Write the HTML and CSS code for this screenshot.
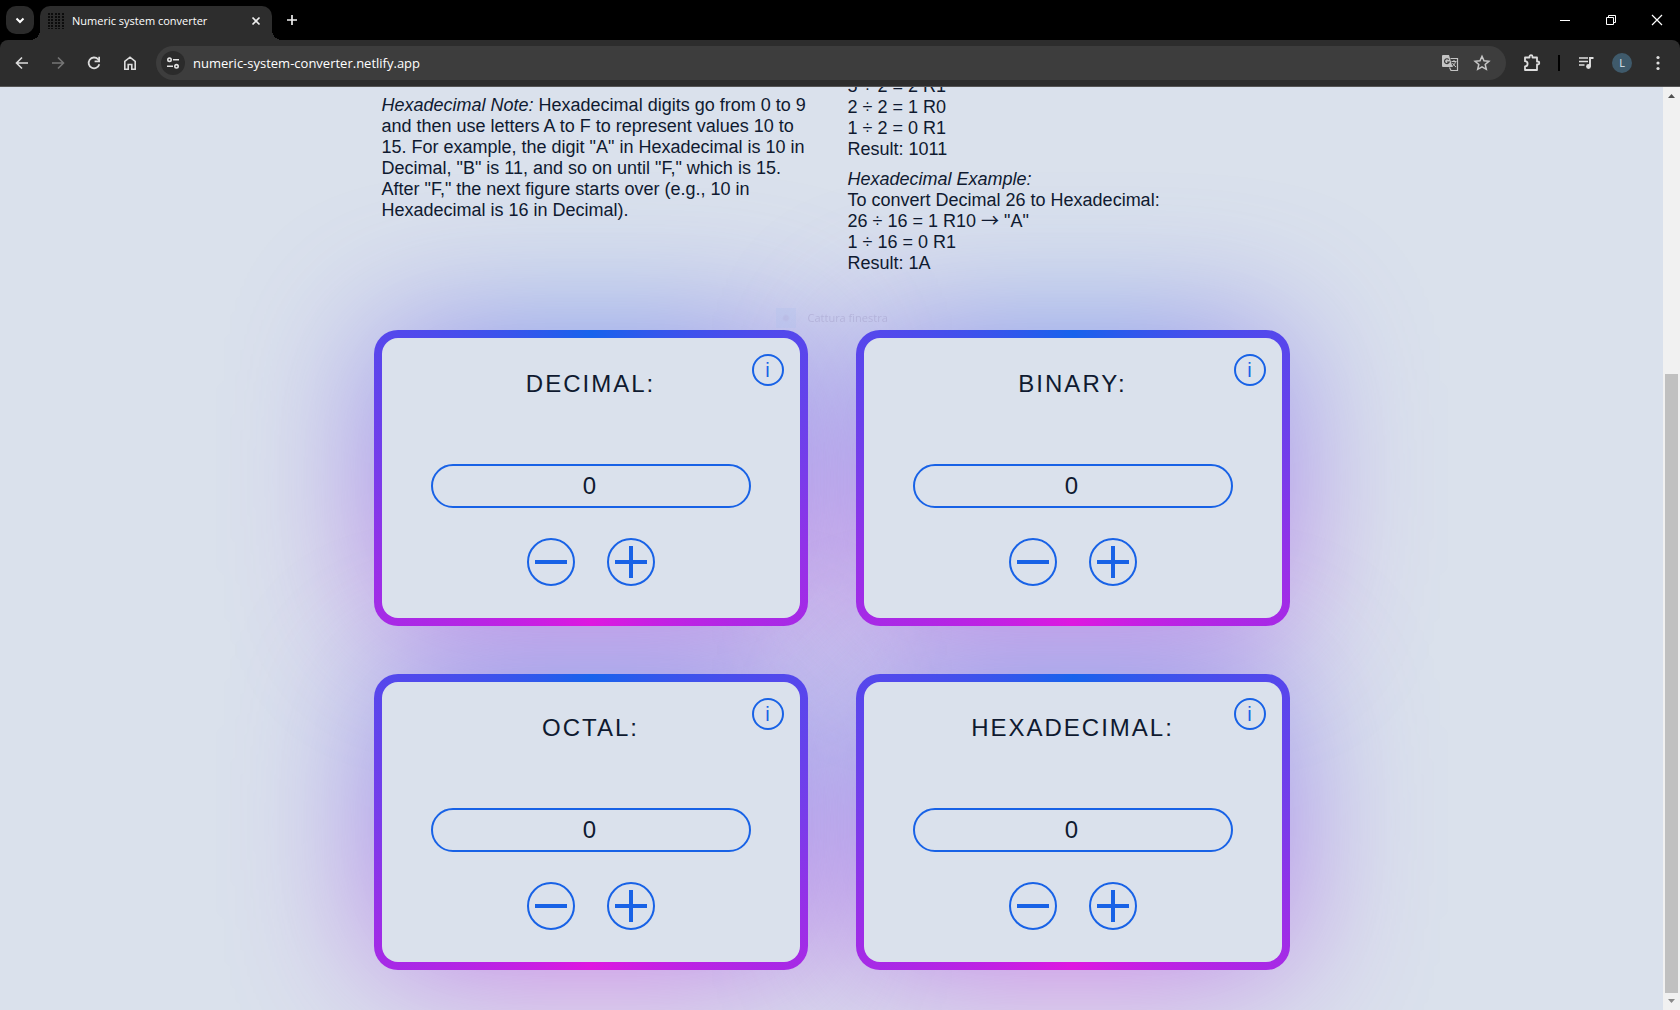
FILE: index.html
```html
<!DOCTYPE html>
<html lang="en">
<head>
<meta charset="utf-8">
<title>Numeric system converter</title>
<link rel="stylesheet" href="styles.css">
</head>
<body>
<header class="browser">
  <div class="tab-strip">
    <button class="tab-search" aria-label="Search tabs"><svg width="12" height="12" viewBox="0 0 12 12"><path d="M2.5 4.5 6 8l3.500-3.500" fill="none" stroke="#fff" stroke-width="2"/></svg></button>
    <div class="tab">
      <svg class="favicon" width="16" height="16" viewBox="0 0 16 16"><g fill="none" stroke="#0c0c0c" stroke-width="2" stroke-dasharray="2 1"><path d="M1 0v16M4 0v16M8 0v16M11 0v16M15 0v16"/></g></svg>
      <span class="tab-title">Numeric system converter</span>
      <button class="tab-close" aria-label="Close tab"><svg width="10" height="10" viewBox="0 0 10 10"><path d="M1.500 1.500l7 7M8.500 1.500l-7 7" fill="none" stroke="#eee" stroke-width="1.700"/></svg></button>
    </div>
    <button class="new-tab" aria-label="New tab"><svg width="12" height="12" viewBox="0 0 12 12"><path d="M6 1v10M1 6h10" fill="none" stroke="#eee" stroke-width="1.700"/></svg></button>
    <div class="window-controls">
      <button aria-label="Minimize"><svg width="12" height="12" viewBox="0 0 12 12"><path d="M1 6.500h10" stroke="#fff"/></svg></button>
      <button aria-label="Restore"><svg width="12" height="12" viewBox="0 0 12 12"><path d="M1.500 3.500h7v7h-7zM3.500 3.500v-2h7v7h-2" fill="none" stroke="#fff"/></svg></button>
      <button aria-label="Close"><svg width="12" height="12" viewBox="0 0 12 12"><path d="M1 1l10 10M11 1 1 11" fill="none" stroke="#fff" stroke-width="1.200"/></svg></button>
    </div>
  </div>
  <div class="toolbar">
    <button class="tool" aria-label="Back"><svg width="16" height="16" viewBox="0 0 16 16"><path d="M14 8H3M8 2.500 2.500 8 8 13.500" fill="none" stroke="#dcdcdc" stroke-width="1.600"/></svg></button>
    <button class="tool" aria-label="Forward"><svg width="16" height="16" viewBox="0 0 16 16"><path d="M2 8h11M8 2.500 13.500 8 8 13.500" fill="none" stroke="#757575" stroke-width="1.600"/></svg></button>
    <button class="tool" aria-label="Reload"><svg width="16" height="16" viewBox="0 0 16 16"><path d="M13.300 9.200A5.400 5.400 0 1 1 12 4.200l1.200 1.200" fill="none" stroke="#dcdcdc" stroke-width="1.800"/><path d="M14 1.800v5.400H8.600V5.600h3.700V1.800z" fill="#dcdcdc"/></svg></button>
    <button class="tool" aria-label="Home"><svg width="16" height="16" viewBox="0 0 16 16"><path d="M2.800 6.300 8 2.200l5.200 4.100v7.900H9.800V9.500H6.200v4.700H2.800z" fill="none" stroke="#dcdcdc" stroke-width="1.600"/></svg></button>
    <div class="omnibox">
      <button class="site-info" aria-label="View site information"><svg width="14" height="14" viewBox="0 0 14 14"><g fill="none" stroke="#e3e3e3" stroke-width="1.600"><circle cx="3.500" cy="3.700" r="1.700"/><path d="M7 3.700h6M1 10.300h6"/><circle cx="10.500" cy="10.300" r="1.700"/></g></svg></button>
      <input class="url" type="text" aria-label="Address" value="numeric-system-converter.netlify.app">
      <button class="omni-action" aria-label="Translate"><svg width="18" height="18" viewBox="0 0 18 18"><path d="M2 1h6l3.500 12H2a1 1 0 0 1-1-1V2a1 1 0 0 1 1-1z" fill="#c4c4c4"/><path d="M7.800 5.600A2.400 2.400 0 1 0 8.200 8H6" fill="none" stroke="#3d3d3d" stroke-width="1.200"/><path d="M9.500 4.500h7v12H10l-1.500-3" fill="none" stroke="#c4c4c4" stroke-width="1.200"/><path d="M10.500 7.500h5M13 6v1.500M14.500 7.500c-.5 2.500-2 4-3.500 5M11.500 9c1 1.700 2 2.800 3.500 4" fill="none" stroke="#c4c4c4"/></svg></button>
      <button class="omni-action" aria-label="Bookmark this tab"><svg width="18" height="18" viewBox="0 0 18 18"><path d="M9 2.300l2 4.500 4.900.5-3.700 3.200 1.100 4.800L9 12.800l-4.300 2.500 1.100-4.800-3.700-3.200 4.900-.5z" fill="none" stroke="#c7c7c7" stroke-width="1.500"/></svg></button>
    </div>
    <button class="tool" aria-label="Extensions"><svg width="18" height="18" viewBox="0 0 18 18"><path d="M2 3.500h4.500v-.8a1.500 1.500 0 0 1 3 0v.8H14v4h.8a1.500 1.500 0 0 1 0 3H14V16H2v-3.600a2.600 2.600 0 0 0 0-5.200z" fill="none" stroke="#dedede" stroke-width="1.800" stroke-linejoin="round"/></svg></button>
    <span class="separator"></span>
    <button class="tool" aria-label="Media controls"><svg width="16" height="14" viewBox="0 0 16 14"><path d="M1 2h9M1 5.500h9M1 9h5.500" stroke="#dedede" stroke-width="1.700"/><path d="M12 10.500V2h3.500" fill="none" stroke="#dedede" stroke-width="1.900"/><circle cx="10.500" cy="10.500" r="2.400" fill="#dedede"/></svg></button>
    <button class="tool" aria-label="Profile"><span class="avatar">L</span></button>
    <button class="tool" aria-label="Menu"><svg width="4" height="16" viewBox="0 0 4 16"><g fill="#dedede"><circle cx="2" cy="2.500" r="1.600"/><circle cx="2" cy="8" r="1.600"/><circle cx="2" cy="13.500" r="1.600"/></g></svg></button>
  </div>
</header>

<div class="viewport">
  <main class="page">
    <section class="notes">
      <div class="note note-hex">
        <p><em>Hexadecimal Note:</em> Hexadecimal digits go from 0 to 9 and then use letters A to F to represent values 10 to 15. For example, the digit "A" in Hexadecimal is 10 in Decimal, "B" is 11, and so on until "F," which is 15. After "F," the next figure starts over (e.g., 10 in Hexadecimal is 16 in Decimal).</p>
      </div>
      <div class="note">
        <p>5 ÷ 2 = 2 R1<br>2 ÷ 2 = 1 R0<br>1 ÷ 2 = 0 R1<br>Result: 1011</p>
        <p><em>Hexadecimal Example:</em><br>To convert Decimal 26 to Hexadecimal:<br>26 ÷ 16 = 1 R10 <span class="arrow">→</span> "A"<br>1 ÷ 16 = 0 R1<br>Result: 1A</p>
      </div>
    </section>
    <section class="cards">
      <article class="card">
        <button class="info" aria-label="About decimal">i</button>
        <label class="card-title" for="decimal">DECIMAL:</label>
        <input class="value" id="decimal" type="text" value="0">
        <div class="steps"><button class="step minus" aria-label="Decrease"></button><button class="step plus" aria-label="Increase"></button></div>
      </article>
      <article class="card">
        <button class="info" aria-label="About binary">i</button>
        <label class="card-title" for="binary">BINARY:</label>
        <input class="value" id="binary" type="text" value="0">
        <div class="steps"><button class="step minus" aria-label="Decrease"></button><button class="step plus" aria-label="Increase"></button></div>
      </article>
      <article class="card">
        <button class="info" aria-label="About octal">i</button>
        <label class="card-title" for="octal">OCTAL:</label>
        <input class="value" id="octal" type="text" value="0">
        <div class="steps"><button class="step minus" aria-label="Decrease"></button><button class="step plus" aria-label="Increase"></button></div>
      </article>
      <article class="card">
        <button class="info" aria-label="About hexadecimal">i</button>
        <label class="card-title" for="hexadecimal">HEXADECIMAL:</label>
        <input class="value" id="hexadecimal" type="text" value="0">
        <div class="steps"><button class="step minus" aria-label="Decrease"></button><button class="step plus" aria-label="Increase"></button></div>
      </article>
      <div class="capture-hint"><span class="capture-icon"></span>Cattura finestra</div>
    </section>
  </main>
  <div class="scrollbar">
    <svg width="17" height="17" viewBox="0 0 17 17"><path d="M5 11l3.500-4 3.500 4z" fill="#505050"/></svg>
    <div class="scroll-space"></div>
    <div class="scroll-thumb"></div>
    <svg width="17" height="17" viewBox="0 0 17 17"><path d="M5 6l3.500 4L12 6z" fill="#8a8a8a"/></svg>
  </div>
</div>
</body>
</html>
```
FILE: styles.css
```css
* { box-sizing: border-box; }

:root {
  --page: #dae1ec;
  --ink: #0f1a30;
  --blue: #1862e6;
  --ring: conic-gradient(#1763ec, #5647ec 56deg, #7a3bea 90deg, #a62ae6 124deg, #de18e0 180deg, #a62ae6 236deg, #7a3bea 270deg, #5647ec 304deg, #1763ec);
}

body {
  margin: 0;
  height: 100vh;
  display: flex;
  flex-direction: column;
  overflow: hidden;
  background: var(--page);
  color: var(--ink);
  font-family: "Liberation Sans", Arial, sans-serif;
}

button {
  display: flex;
  align-items: center;
  justify-content: center;
  margin: 0;
  padding: 0;
  border: 0;
  background: none;
  color: inherit;
  font-family: inherit;
}

input { min-width: 0; margin: 0; outline: 0; }

/* browser frame */
.browser {
  flex: none;
  background: #000;
  color: #fff;
  font-family: "Open Sans", "Noto Sans", sans-serif;
}

.tab-strip {
  display: flex;
  align-items: center;
  height: 40px;
  padding-left: 6px;
}

.tab-search {
  width: 28px;
  height: 28px;
  margin-right: 6px;
  border-radius: 10px;
  background: #2b2b2b;
}

.tab {
  position: relative;
  display: flex;
  align-items: center;
  align-self: flex-end;
  gap: 8px;
  width: 232px;
  height: 34px;
  padding: 0 8px 4px;
  border-radius: 10px 10px 0 0;
  background: #2d2d2d;
}

.tab::before,
.tab::after {
  content: "";
  position: absolute;
  bottom: 0;
  width: 10px;
  height: 10px;
}

.tab::before { right: 100%; background: radial-gradient(circle at 0 0, #0000 10px, #2d2d2d 10px); }
.tab::after { left: 100%; background: radial-gradient(circle at 100% 0, #0000 10px, #2d2d2d 10px); }

.tab-title { flex: 1; font-size: 11px; line-height: 16px; white-space: nowrap; }
.tab-close { width: 16px; height: 16px; }
.new-tab { width: 28px; height: 28px; margin-left: 6px; }

.window-controls { display: flex; margin-left: auto; }
.window-controls button { width: 46px; height: 40px; }

.toolbar {
  display: flex;
  align-items: center;
  height: 47px;
  padding: 0 4px;
  border-bottom: 1px solid #555;
  border-radius: 8px 8px 0 0;
  background: #2d2d2d;
}

.tool { width: 36px; height: 34px; flex: none; }

.omnibox {
  flex: 1;
  display: flex;
  align-items: center;
  height: 34px;
  margin: 0 8px;
  padding: 0 8px 0 5px;
  border-radius: 17px;
  background: #3d3d3d;
}

.site-info { width: 24px; height: 24px; border-radius: 50%; background: #2b2b2b; }

.url {
  flex: 1;
  margin-left: 8px;
  padding: 0;
  border: 0;
  background: none;
  color: #fff;
  font: 13px/20px "Open Sans", "Noto Sans", sans-serif;
}

.omni-action { width: 32px; height: 32px; }
.separator { width: 2px; height: 16px; margin: 0 8px; background: #000; }

.avatar {
  width: 20px;
  height: 20px;
  border-radius: 50%;
  background: #3f5a6b;
  color: #dfe9f0;
  font-size: 11px;
  line-height: 20px;
}

/* page area, scrolled to its end */
.viewport { flex: 1; min-height: 0; display: flex; overflow: hidden; }

.page {
  position: relative;
  isolation: isolate;
  flex: 1;
  display: flex;
  flex-direction: column;
  align-items: center;
  justify-content: flex-end;
  gap: 56px;
  padding-bottom: 40px;
}

.notes {
  display: grid;
  grid-template-columns: 1fr 1fr;
  gap: 32px;
  width: 100%;
  max-width: 900px;
  font-size: 18px;
  line-height: 21px;
}

.note p { margin: 0 0 9px; }
.note p:last-child { margin: 0; }
.note-hex { margin-top: 19px; }
.arrow { font-family: "Noto Sans CJK JP", sans-serif; line-height: 0; }

.cards {
  position: relative;
  display: grid;
  grid-template-columns: 1fr 1fr;
  gap: 48px;
  width: 100%;
  max-width: 916px;
}

.card {
  position: relative;
  display: flex;
  flex-direction: column;
  align-items: center;
  padding: 32px 24px;
  border: 8px solid transparent;
  border-radius: 24px;
  background: linear-gradient(var(--page), var(--page)) padding-box, var(--ring) border-box;
}

.card::before {
  content: "";
  position: absolute;
  inset: -8px;
  z-index: -1;
  border-radius: 24px;
  background: var(--ring);
  filter: blur(72px);
  opacity: 0.52;
}

.card-title { font-size: 24px; line-height: 28px; letter-spacing: 2px; }

.info {
  position: absolute;
  top: 16px;
  right: 16px;
  width: 32px;
  height: 32px;
  border: 2px solid var(--blue);
  border-radius: 50%;
  color: var(--blue);
  font-size: 20px;
  line-height: 24px;
}

.value {
  width: 320px;
  max-width: 100%;
  height: 44px;
  margin: 66px 0 30px;
  padding: 0;
  border: 2px solid var(--blue);
  border-radius: 22px;
  background: none;
  color: var(--ink);
  font: 24px/28px "Liberation Sans", Arial, sans-serif;
  letter-spacing: 2px;
  text-align: center;
}

.steps { display: flex; gap: 32px; }

.step {
  width: 48px;
  height: 48px;
  border: 2px solid var(--blue);
  border-radius: 50%;
  background: linear-gradient(var(--blue), var(--blue)) center / 32px 4px no-repeat;
}

.plus {
  background:
    linear-gradient(var(--blue), var(--blue)) center / 32px 4px no-repeat,
    linear-gradient(var(--blue), var(--blue)) center / 4px 32px no-repeat;
}

/* fading toast left over the page */
.capture-hint {
  position: absolute;
  top: -22px;
  left: 402px;
  display: flex;
  align-items: center;
  gap: 12px;
  color: #a9a6cf;
  font: 11px/20px "Open Sans", "Noto Sans", sans-serif;
  opacity: 0.6;
}

.capture-icon {
  width: 20px;
  height: 20px;
  background: radial-gradient(circle, #9b9bd0 2px, #a9bdec 4px);
  opacity: 0.4;
}

.scrollbar {
  flex: none;
  display: flex;
  flex-direction: column;
  align-items: center;
  width: 17px;
  background: #f1f1f1;
}

.scrollbar svg { flex: none; }
.scroll-space { flex: 270; }
.scroll-thumb { flex: 619; width: 13px; background: #c0c0c0; }
```
